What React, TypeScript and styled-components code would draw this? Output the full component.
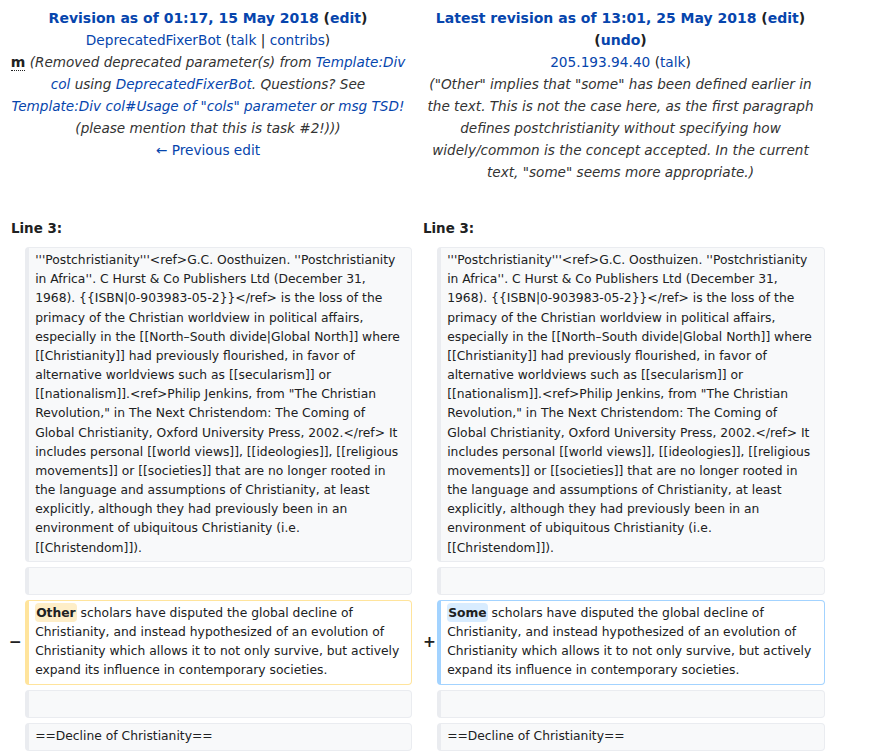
import React from "react";
import styled, { createGlobalStyle, css } from "styled-components";

const GlobalStyle = createGlobalStyle`
  html, body { margin: 0; padding: 0; background: #ffffff; }
  body {
    font-family: "DejaVu Sans", "Liberation Sans", sans-serif;
    color: #202122;
  }
`;

const DiffTable = styled.div`
  display: grid;
  grid-template-columns: 25px 387px 25px 388px;
  row-gap: 5px;
  padding-top: 4px;
  width: 825px;
`;

const HeaderCell = styled.div`
  grid-column: span 2;
  padding: 3px 4px 0 8px;
  text-align: center;
  font-size: 13.7px;
  line-height: 22px;
`;

const Title = styled.div`
  font-weight: bold;
  font-size: 14px;
`;

const Link = styled.a`
  color: #0645ad;
  text-decoration: none;
  cursor: pointer;
`;

const Minor = styled.abbr`
  font-weight: bold;
  font-size: 14px;
  text-decoration: none;
  border-bottom: 1px dotted #202122;
  cursor: help;
`;

const Comment = styled.span`
  font-style: italic;
  font-size: 13.6px;
  color: #333333;
`;

const LineNo = styled.div`
  grid-column: span 2;
  padding-left: 11px;
  margin-top: 29.6px;
  margin-bottom: 2.5px;
  font-size: 13.4px;
  font-weight: bold;
  line-height: 22px;
`;

const Marker = styled.div<{ $side: "left" | "right" }>`
  align-self: center;
  text-align: right;
  padding-right: ${(p) => (p.$side === "left" ? "3px" : "1px")};
  font-size: 15.4px;
  font-weight: bold;
  line-height: 1.2;
`;

type Kind = "context" | "deleted" | "added";

const kindStyles: Record<Kind, ReturnType<typeof css>> = {
  context: css`
    background: #f8f9fa;
    border-color: #eaecf0;
  `,
  deleted: css`
    background: #ffffff;
    border-color: #ffe49c;
  `,
  added: css`
    background: #ffffff;
    border-color: #a3d3ff;
  `,
};

const Box = styled.div<{ $kind: Kind }>`
  box-sizing: border-box;
  min-height: 28px;
  border-style: solid;
  border-width: 1px 1px 1px 4px;
  border-radius: 4px;
  padding: 3.08px 6.16px;
  font-size: 12.32px;
  line-height: 19.15px;
  white-space: pre-wrap;
  overflow-wrap: break-word;
  color: #202122;
  ${(p) => kindStyles[p.$kind]}
`;

const Change = styled.span<{ $kind: "deleted" | "added" }>`
  font-weight: bold;
  border-radius: 4px;
  padding: 2.5px 1px;
  background: ${(p) => (p.$kind === "deleted" ? "#feeec8" : "#d8ecff")};
`;

const firstPara =
  "'''Postchristianity'''<ref>G.C. Oosthuizen. ''Postchristianity in Africa''. C Hurst & Co Publishers Ltd (December 31, 1968). {{ISBN|0-903983-05-2}}</ref> is the loss of the primacy of the Christian worldview in political affairs, especially in the [[North–South divide|Global North]] where [[Christianity]] had previously flourished, in favor of alternative worldviews such as [[secularism]] or [[nationalism]].<ref>Philip Jenkins, from \"The Christian Revolution,\" in The Next Christendom: The Coming of Global Christianity, Oxford University Press, 2002.</ref> It includes personal [[world views]], [[ideologies]], [[religious movements]] or [[societies]] that are no longer rooted in the language and assumptions of Christianity, at least explicitly, although they had previously been in an environment of ubiquitous Christianity (i.e. [[Christendom]]).";

const changedRest =
  " scholars have disputed the global decline of Christianity, and instead hypothesized of an evolution of Christianity which allows it to not only survive, but actively expand its influence in contemporary societies.";

const Empty = () => <div />;

export default function App() {
  return (
    <>
      <GlobalStyle />
      <DiffTable>
        <HeaderCell>
          <Title>
            <Link>Revision as of 01:17, 15 May 2018</Link> (<Link>edit</Link>)
          </Title>
          <div>
            <Link>DeprecatedFixerBot</Link> (<Link>talk</Link> | <Link>contribs</Link>)
          </div>
          <div>
            <Minor title="This is a minor edit">m</Minor>{" "}
            <Comment>
              (Removed deprecated parameter(s) from <Link>Template:Div col</Link> using{" "}
              <Link>DeprecatedFixerBot</Link>. Questions? See{" "}
              <Link>Template:Div col#Usage of "cols" parameter</Link> or <Link>msg TSD!</Link>{" "}
              (please mention that this is task #2!)))
            </Comment>
          </div>
          <div>
            <Link>← Previous edit</Link>
          </div>
        </HeaderCell>
        <HeaderCell>
          <Title>
            <Link>Latest revision as of 13:01, 25 May 2018</Link> (<Link>edit</Link>) (
            <Link>undo</Link>)
          </Title>
          <div>
            <Link>205.193.94.40</Link> (<Link>talk</Link>)
          </div>
          <div>
            <Comment>
              ("Other" implies that "some" has been defined earlier in the text. This is not the
              case here, as the first paragraph defines postchristianity without specifying how
              widely/common is the concept accepted. In the current text, "some" seems more
              appropriate.)
            </Comment>
          </div>
        </HeaderCell>

        <LineNo>Line 3:</LineNo>
        <LineNo>Line 3:</LineNo>

        <Empty />
        <Box $kind="context">{firstPara}</Box>
        <Empty />
        <Box $kind="context">{firstPara}</Box>

        <Empty />
        <Box $kind="context" />
        <Empty />
        <Box $kind="context" />

        <Marker $side="left">−</Marker>
        <Box $kind="deleted">
          <Change $kind="deleted">Other</Change>
          {changedRest}
        </Box>
        <Marker $side="right">+</Marker>
        <Box $kind="added">
          <Change $kind="added">Some</Change>
          {changedRest}
        </Box>

        <Empty />
        <Box $kind="context" />
        <Empty />
        <Box $kind="context" />

        <Empty />
        <Box $kind="context">==Decline of Christianity==</Box>
        <Empty />
        <Box $kind="context">==Decline of Christianity==</Box>
      </DiffTable>
    </>
  );
}
